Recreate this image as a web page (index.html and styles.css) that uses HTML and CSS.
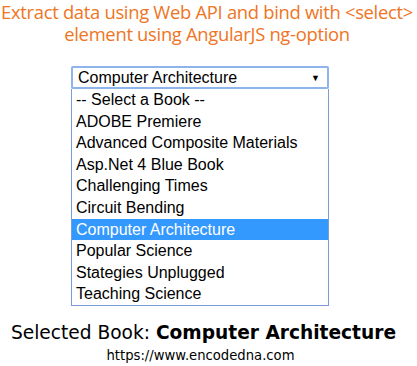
FILE: index.html
```html
<!DOCTYPE html>
<html>

<head>
    <link rel="stylesheet" href="styles.css">
</head>

<body>
    <div id="content">
        <h1 class="title">Extract data using Web API and bind with &lt;select&gt; element using AngularJS ng-option</h1>
        <div class="picker">
            <div class="select">
                <span>Computer Architecture</span>
                <span class="arrow">&#9660;</span>
            </div>
            <ul class="list">
                <li>-- Select a Book --</li>
                <li>ADOBE Premiere</li>
                <li>Advanced Composite Materials</li>
                <li>Asp.Net 4 Blue Book</li>
                <li>Challenging Times</li>
                <li>Circuit Bending</li>
                <li class="selected">Computer Architecture</li>
                <li>Popular Science</li>
                <li>Stategies Unplugged</li>
                <li>Teaching Science</li>
            </ul>
        </div>
        <p class="result">Selected Book: <b>Computer Architecture</b></p>
        <p class="site">https://www.encodedna.com</p>
    </div>
</body>

</html>
```
FILE: styles.css
```css
body {
    margin: 0px;
    background: white;
}

#content {
    width: 417px;
    text-align: center;
}

.title {
    margin: 0px;
    padding: 1px 3px 0px 0px;
    font-family: "Open Sans", sans-serif;
    font-weight: normal;
    font-size: 18.4px;
    line-height: 22px;
    color: #ee7524;
    letter-spacing: -0.3px;
}

.picker {
    width: 258px;
    margin: 21px 0px 0px 71px;
    text-align: left;
    font-family: "Liberation Sans", Arial, sans-serif;
    font-size: 16px;
}

.select {
    display: flex;
    justify-content: space-between;
    align-items: center;
    height: 19px;
    padding: 0px 4px 0px 5px;
    border: 2px solid #8fb4ec;
    border-radius: 2px;
    color: black;
}

.arrow {
    font-size: 9px;
    margin-right: 3px;
}

.list {
    list-style: none;
    margin: 0px;
    padding: 0px;
    border: 1px solid #7a9cd6;
    border-top: 0;
}

.list li {
    height: 21.6px;
    line-height: 21.6px;
    padding-left: 4px;
    color: black;
}

.list li.selected {
    background: #3399ff;
    color: white;
}

.result {
    margin: 16px 0px 0px;
    padding-right: 10px;
    font-family: "DejaVu Sans", Verdana, sans-serif;
    font-size: 18.6px;
    color: black;
}

.site {
    margin: 5px 0px 0px;
    padding-right: 16px;
    font-family: "DejaVu Sans", Verdana, sans-serif;
    font-size: 13.2px;
    color: black;
}
```
